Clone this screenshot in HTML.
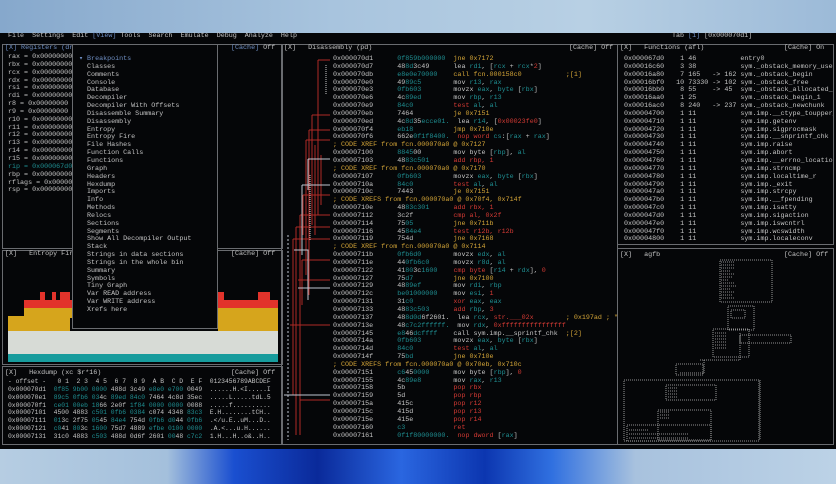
<!DOCTYPE html>
<html><head><meta charset="utf-8"><style>
*{margin:0;padding:0;box-sizing:border-box}
html,body{width:836px;height:484px;overflow:hidden;background:#a9c4dc}
body{position:relative;font-family:"Liberation Mono",monospace;font-size:6.7px;color:#c4c4c4}
.bgtop{position:absolute;left:0;top:0;width:836px;height:34px;background:linear-gradient(90deg,#86a8cc 0%,#a8c4de 40%,#b8d0e4 70%,#9cbad8 100%)}
.bgbot{position:absolute;left:0;top:448px;width:836px;height:36px;background:linear-gradient(90deg,#b6cde2 0%,#a4c0dc 20%,#1a4fd0 28%,#0a2a9a 38%,#2a66e0 48%,#0c36b0 58%,#3070e0 66%,#a8c2de 76%,#bcd2e6 100%)}
.term{position:absolute;left:0;top:33px;width:836px;height:416px;background:#050608}
.p{position:absolute;border:1px solid #6a6c70}
.l{position:absolute;white-space:pre;line-height:7.85px}
.t{color:#1f8f92}.y{color:#d3a437}.r{color:#d43a34}.b{color:#6f8fc4}.w{color:#e0e0e0}.d{color:#8a8a8a}
</style></head><body>
<div class="bgtop"></div>
<div class="bgbot"></div>
<div class="term"></div>
<div class="l" style="left:8px;top:33px">File  Settings  Edit <span class="b">[View]</span> Tools  Search  Emulate  Debug  Analyze  Help</div>
<div class="l" style="left:672px;top:33px">Tab <span class="b">[1]</span> [0x000070d1]</div>

<div class="p" style="left:2px;top:44px;width:281px;height:205px"></div>
<div class="p" style="left:2px;top:250px;width:281px;height:115px"></div>
<div class="p" style="left:2px;top:366px;width:281px;height:79px"></div>
<div class="p" style="left:281px;top:44px;width:337px;height:401px"></div>
<div class="p" style="left:617px;top:44px;width:217px;height:201px"></div>
<div class="p" style="left:617px;top:248px;width:217px;height:197px"></div>

<div class="l b" style="left:5px;top:45px">[X] Registers (dr</div>
<div class="l" style="left:231px;top:45px"><span class="b">[Cache]</span> Off</div>
<div class="l" style="left:8px;top:54px">rax = 0x00000000
rbx = 0x00000000
rcx = 0x00000000
rdx = 0x00000000
rsi = 0x00000000
rdi = 0x00000000
r8 = 0x00000000
r9 = 0x00000000
r10 = 0x00000000
r11 = 0x00000000
r12 = 0x00000000
r13 = 0x00000000
r14 = 0x00000000
r15 = 0x00000000
<span class="t">rip = 0x000067d0</span>
rbp = 0x00000000
rflags = 0x00000
rsp = 0x00000000</div>

<div class="l" style="left:5px;top:251px">[X]   Entropy Fire</div>
<div class="l" style="left:231px;top:251px">[Cache] Off</div>
<svg style="position:absolute;left:0;top:0" width="836" height="484">
<rect x="8" y="316" width="62" height="16" fill="#d6a51c"/>
<rect x="24" y="308" width="50" height="10" fill="#d6a51c"/>
<rect x="24" y="300" width="50" height="8" fill="#e2332b"/>
<rect x="40" y="292" width="5" height="9" fill="#e2332b"/>
<rect x="52" y="292" width="4" height="9" fill="#e2332b"/>
<rect x="60" y="292" width="10" height="9" fill="#e2332b"/>
<rect x="218" y="308" width="60" height="24" fill="#d6a51c"/>
<rect x="218" y="300" width="60" height="8" fill="#e2332b"/>
<rect x="218" y="292" width="6" height="9" fill="#e2332b"/>
<rect x="258" y="292" width="12" height="9" fill="#e2332b"/>
<rect x="8" y="331" width="270" height="23" fill="#d7dbd6"/>
<rect x="8" y="354" width="270" height="8" fill="#179c9d"/>
</svg>

<div class="l" style="left:5px;top:370px">[X]   Hexdump (xc $r*16)</div>
<div class="l" style="left:231px;top:370px">[Cache] Off</div>
<div class="l" style="left:8px;top:378px;font-size:6.35px">- offset -   0 1  2 3  4 5  6 7  8 9  A B  C D  E F  0123456789ABCDEF
0x000070d1  <span class="t">0f85 9b00 0000</span> 488d 3c49 <span class="t">e8e0 e700</span> 0049  ......H.&lt;I.....I
0x000070e1  <span class="t">89c5 0fb6 03</span>4c <span class="t">89ed 84c0</span> 7464 4c8d 35ec  .....L.....tdL.5
0x000070f1  <span class="t">ce01 00eb 18</span>66 2e0f <span class="t">1f84 0000 0000</span> 0088  .....f..........
0x00007101  4500 4883 <span class="t">c501 0fb6 0384</span> c074 4348 <span class="t">83c3</span>  E.H........tCH..
0x00007111  <span class="t">01</span>3c 2f75 <span class="t">05</span>45 <span class="t">84e4</span> 754d <span class="t">0fb6 d0</span>44 <span class="t">0fb6</span>  .&lt;/u.E..uM...D..
0x00007121  <span class="t">c0</span>41 <span class="t">80</span>3c <span class="t">1600</span> 75d7 4889 <span class="t">efbe 0100 0000</span>  .A.&lt;...u.H......
0x00007131  31c0 4883 <span class="t">c503</span> 488d 0d6f 2601 <span class="t">00</span>48 <span class="t">c7c2</span>  1.H...H..o&amp;..H..</div>

<div style="position:absolute;left:72px;top:44px;width:146px;height:285px;background:#050608;border:1px solid #6a6c70"></div>
<div class="l" style="left:79px;top:56px"><span class="b">▾ Breakpoints</span>
  Classes
  Comments
  Console
  Database
  Decompiler
  Decompiler With Offsets
  Disassemble Summary
  Disassembly
  Entropy
  Entropy Fire
  File Hashes
  Function Calls
  Functions
  Graph
  Headers
  Hexdump
  Imports
  Info
  Methods
  Relocs
  Sections
  Segments
  Show All Decompiler Output
  Stack
  Strings in data sections
  Strings in the whole bin
  Summary
  Symbols
  Tiny Graph
  Var READ address
  Var WRITE address
  Xrefs here</div>

<div class="l" style="left:284px;top:45px">[X]   Disassembly (pd)</div>
<div class="l" style="left:569px;top:45px">[Cache] Off</div>
<svg style="position:absolute;left:282px;top:55px" width="52" height="390" fill="none" stroke-width="1">
<g stroke="#b02a26">
<path d="M36 5H48M36 5V160"/><path d="M30 60H48M30 60V170"/><path d="M27 75H48M27 75V240"/>
<path d="M24 85H48M24 85V220"/><path d="M33 90V180"/><path d="M21 140H48M21 140V180"/>
<path d="M18 160H48M18 160V380"/><path d="M14 172H48M14 172V380"/><path d="M39 100V150"/>
<path d="M11 184H48M11 184V340"/><path d="M20 205H48M20 205V250"/><path d="M8 270H48"/>
<path d="M18 345H48"/><path d="M16 225H48"/>
</g>
<g stroke="#c8c8c8" stroke-dasharray="1,1">
<path d="M44 10V40"/><path d="M28 120V185"/>
</g>
<g stroke="#c0c6d0">
<path d="M26 104H48M26 104V135"/><path d="M20 130H48M20 130V200"/><path d="M12 195H26V245"/>
<path d="M6 180V385" stroke-dasharray="2,2"/><path d="M2 340H48"/><path d="M16 233H48"/>
</g>
</svg>
<div class="l" style="left:333px;top:56px">0x000070d1      <span class="t">0f859b000000</span>  <span class="y">jne 0x7172</span>
0x000070d7      48<span class="t">8d</span>3c49      lea <span class="t">rdi</span>, [<span class="t">rcx</span> + <span class="t">rcx</span>*<span class="r">2</span>]
0x000070db      <span class="t">e8e0e70000</span>    <span class="y">call fcn.000158c0</span>           <span class="y">;[1]</span>
0x000070e0      49<span class="t">89c5</span>        mov <span class="t">r13</span>, <span class="t">rax</span>
0x000070e3      <span class="t">0fb603</span>        movzx <span class="t">eax</span>, <span class="t">byte</span> [<span class="t">rbx</span>]
0x000070e6      4c<span class="t">89ed</span>        mov <span class="t">rbp</span>, <span class="t">r13</span>
0x000070e9      <span class="t">84c0</span>          <span class="r">test</span> <span class="t">al</span>, <span class="t">al</span>
0x000070eb      7464          <span class="y">je 0x7151</span>
0x000070ed      4c<span class="t">8d</span>35<span class="t">ecce01.</span>  lea <span class="t">r14</span>, [<span class="r">0x00023fe0</span>]
0x000070f4      <span class="t">eb18</span>          <span class="y">jmp 0x710e</span>
0x000070f6      662e<span class="t">0f1f8400.</span>  <span class="r">nop word</span> <span class="t">cs</span>:[<span class="t">rax</span> + <span class="t">rax</span>]
<span class="y">; CODE XREF from fcn.000070a0 @ 0x7127</span>
0x00007100      <span class="t">8845</span>00        mov byte [<span class="t">rbp</span>], <span class="t">al</span>
0x00007103      48<span class="t">83c501</span>      <span class="r">add rbp, 1</span>
<span class="y">; CODE XREF from fcn.000070a0 @ 0x7170</span>
0x00007107      <span class="t">0fb603</span>        movzx <span class="t">eax</span>, <span class="t">byte</span> [<span class="t">rbx</span>]
0x0000710a      <span class="t">84c0</span>          <span class="r">test</span> <span class="t">al</span>, <span class="t">al</span>
0x0000710c      7443          <span class="y">je 0x7151</span>
<span class="y">; CODE XREFS from fcn.000070a0 @ 0x70f4, 0x714f</span>
0x0000710e      48<span class="t">83c301</span>      <span class="r">add rbx, 1</span>
0x00007112      3c2f          <span class="r">cmp al, 0x2f</span>
0x00007114      75<span class="t">05</span>          <span class="y">jne 0x711b</span>
0x00007116      45<span class="t">84e4</span>        <span class="r">test r12b, r12b</span>
0x00007119      754d          <span class="y">jne 0x7168</span>
<span class="y">; CODE XREF from fcn.000070a0 @ 0x7114</span>
0x0000711b      <span class="t">0fb6d0</span>        movzx <span class="t">edx</span>, <span class="t">al</span>
0x0000711e      44<span class="t">0fb6c0</span>      movzx <span class="t">r8d</span>, <span class="t">al</span>
0x00007122      41<span class="t">80</span>3c<span class="t">1600</span>    <span class="r">cmp byte</span> [<span class="t">r14</span> + <span class="t">rdx</span>], <span class="r">0</span>
0x00007127      75<span class="t">d7</span>          <span class="y">jne 0x7100</span>
0x00007129      48<span class="t">89ef</span>        mov <span class="t">rdi</span>, <span class="t">rbp</span>
0x0000712c      <span class="t">be01000000</span>    mov <span class="t">esi</span>, <span class="r">1</span>
0x00007131      31<span class="t">c0</span>          <span class="r">xor</span> <span class="t">eax</span>, <span class="t">eax</span>
0x00007133      48<span class="t">83c503</span>      <span class="r">add</span> <span class="t">rbp</span>, <span class="r">3</span>
0x00007137      48<span class="t">8d0d</span>6f2601.  lea <span class="t">rcx</span>, <span class="r">str.___02x</span>        <span class="y">; 0x197ad ; "</span>
0x0000713e      48<span class="t">c7c2ffffff.</span>  mov <span class="t">rdx</span>, <span class="r">0xffffffffffffffff</span>
0x00007145      <span class="t">e8</span>46<span class="t">dcffff</span>    call sym.imp.__sprintf_chk  <span class="y">;[2]</span>
0x0000714a      <span class="t">0fb603</span>        movzx <span class="t">eax</span>, <span class="t">byte</span> [<span class="t">rbx</span>]
0x0000714d      <span class="t">84c0</span>          <span class="r">test</span> <span class="t">al</span>, <span class="t">al</span>
0x0000714f      75<span class="t">bd</span>          <span class="y">jne 0x710e</span>
<span class="y">; CODE XREFS from fcn.000070a0 @ 0x70eb, 0x710c</span>
0x00007151      <span class="t">c6</span>45<span class="t">0000</span>      mov byte [<span class="t">rbp</span>], <span class="r">0</span>
0x00007155      4c<span class="t">89e8</span>        mov <span class="t">rax</span>, <span class="t">r13</span>
0x00007158      5b            <span class="r">pop rbx</span>
0x00007159      5d            <span class="r">pop rbp</span>
0x0000715a      415c          <span class="r">pop r12</span>
0x0000715c      415d          <span class="r">pop r13</span>
0x0000715e      415e          <span class="r">pop r14</span>
0x00007160      <span class="t">c3</span>            <span class="r">ret</span>
0x00007161      <span class="t">0f1f80000000.</span>  <span class="r">nop dword</span> [<span class="t">rax</span>]</div>

<div class="l" style="left:620px;top:45px">[X]   Functions (afl)</div>
<div class="l" style="left:784px;top:45px">[Cache] On</div>
<div class="l" style="left:624px;top:53px;padding-top:3px;width:209px;height:192px;overflow:hidden">0x000067d0    1 46           entry0
0x00016c60    3 38           sym._obstack_memory_used
0x00016a80    7 165   -> 162 sym._obstack_begin
0x00016bf0   10 73330 -> 102 sym._obstack_free
0x00016bb0    8 55    -> 45  sym._obstack_allocated_p
0x00016aa0    1 25           sym._obstack_begin_1
0x00016ac0    8 240   -> 237 sym._obstack_newchunk
0x00004700    1 11           sym.imp.__ctype_toupper_
0x00004710    1 11           sym.imp.getenv
0x00004720    1 11           sym.imp.sigprocmask
0x00004730    1 11           sym.imp.__snprintf_chk
0x00004740    1 11           sym.imp.raise
0x00004750    1 11           sym.imp.abort
0x00004760    1 11           sym.imp.__errno_location
0x00004770    1 11           sym.imp.strncmp
0x00004780    1 11           sym.imp.localtime_r
0x00004790    1 11           sym.imp._exit
0x000047a0    1 11           sym.imp.strcpy
0x000047b0    1 11           sym.imp.__fpending
0x000047c0    1 11           sym.imp.isatty
0x000047d0    1 11           sym.imp.sigaction
0x000047e0    1 11           sym.imp.iswcntrl
0x000047f0    1 11           sym.imp.wcswidth
0x00004800    1 11           sym.imp.localeconv</div>

<div class="l" style="left:620px;top:252px">[X]   agfb</div>
<div class="l" style="left:784px;top:252px">[Cache] Off</div>
<svg style="position:absolute;left:0;top:0" width="836" height="484" fill="none" stroke="#bdbdbd" stroke-width="0.8" stroke-dasharray="1,1">
<rect x="720" y="260" width="52" height="42"/>
<path d="M721 262h14M721 265h14M721 268h14M721 271h10M721 274h14M721 277h12M721 280h8M721 283h14M721 286h16M721 289h10M721 292h14M721 295h12M721 298h14" />
<rect x="728" y="306" width="26" height="24"/>
<rect x="731" y="310" width="14" height="8"/>
<rect x="713" y="329" width="36" height="28"/>
<rect x="740" y="335" width="51" height="8"/>
<path d="M715 333h12M715 336h12M715 339h12M715 342h12M715 345h12M715 348h12"/>
<rect x="676" y="364" width="27" height="11"/>
<path d="M680 373h24V360M700 360h40V333"/>
<rect x="624" y="380" width="135" height="61"/>
<rect x="666" y="385" width="50" height="15"/>
<path d="M668 388h10M668 391h10M668 394h10M668 397h10"/>
<rect x="658" y="410" width="53" height="30"/>
<path d="M660 412h10M660 415h10M660 418h10"/>
<rect x="627" y="425" width="84" height="16"/>
<path d="M629 430h20M629 434h60M629 438h60M760 380V440"/>
</svg>
</body></html>
